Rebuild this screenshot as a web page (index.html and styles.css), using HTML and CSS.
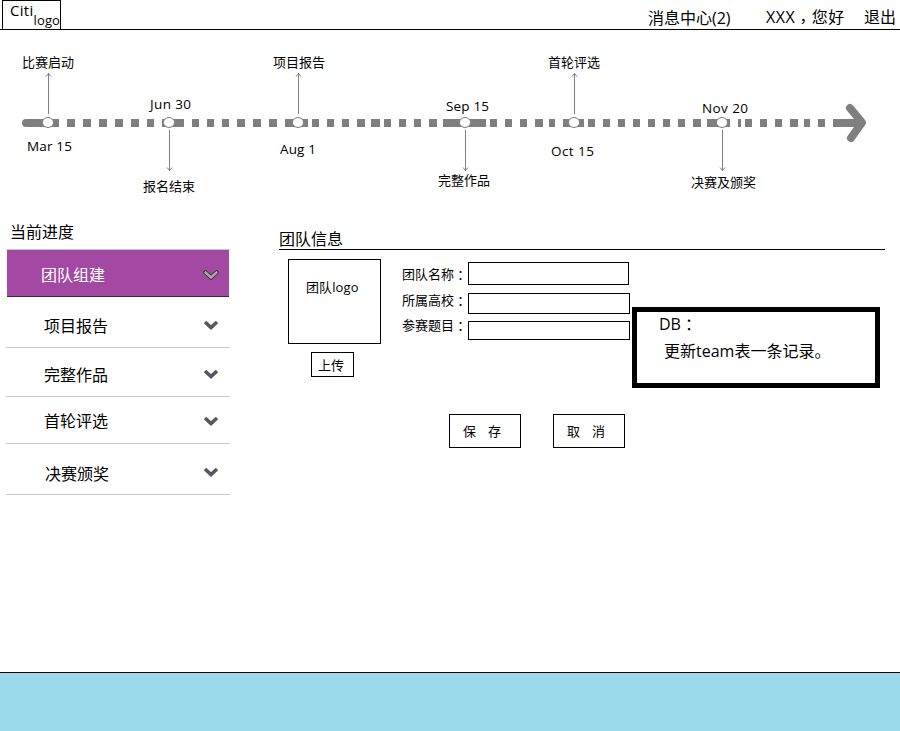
FILE: index.html
```html
<!DOCTYPE html>
<html lang="zh-CN">
<head>
<meta charset="utf-8">
<title>团队信息</title>
<link rel="stylesheet" href="styles.css">
</head>
<body>
<header class="topbar">
  <div class="logo"><span class="logo-main">Citi</span><span class="logo-sub">logo</span></div>
  <nav class="user-nav">
    <a class="messages">消息中心(2)</a>
    <a class="greeting">XXX<span class="punct comma" lang="zh-TW">，</span>您好</a>
    <a>退出</a>
  </nav>
</header>

<svg class="timeline" viewBox="0 30 900 180" width="900" height="180">
  <defs>
    <g id="up"><path d="M.5 114V73M-2 76.5L.5 73.5L3 76.5"/></g>
    <g id="down"><path d="M.5 130V171M-2 167.500L.5 170.500L3 167.500"/></g>
    <ellipse id="stop" cx="0" cy="122.500" rx="5.500" ry="5"/>
  </defs>
  <path class="track" d="M26 119H59V127H26Q22 127 22 123T26 119M67 119h8v8h-8zM83 119h8v8h-8zM99 119h8v8h-8zM115 119h8v8h-8zM131 119h8v8h-8zM147 119h7v8h-7zM162 119h22v8h-22zM192 119h7v8h-7zM207 119h7v8h-7zM222 119h7v8h-7zM237 119h8v8h-8zM253 119h8v8h-8zM269 119h8v8h-8zM285 119h23v8h-23zM312 119h7v8h-7zM327 119h7v8h-7zM342 119h7v8h-7zM357 119h8v8h-8zM371 119h9v8h-9zM384 119h7v8h-7zM399 119h7v8h-7zM414 119h7v8h-7zM429 119h8v8h-8zM443 119h43v8h-43zM490 119h7v8h-7zM505 119h7v8h-7zM520 119h7v8h-7zM535 119h8v8h-8zM549 119h6v8h-6zM563 119h21v8h-21zM588 119h7v8h-7zM603 119h7v8h-7zM618 119h7v8h-7zM633 119h7v8h-7zM648 119h7v8h-7zM663 119h7v8h-7zM678 119h7v8h-7zM693 119h8v8h-8zM707 119h23v8h-23zM738 119h3v8h-3zM745 119h7v8h-7zM760 119h7v8h-7zM775 119h7v8h-7zM790 119h8v8h-8zM804 119h6v8h-6zM818 119h7v8h-7zM833 119h28v8h-28z"/>
  <path class="arrowhead" d="M850 108L862 122.500L851 138"/>
  <g class="pointer">
    <use href="#up" x="48"/><use href="#down" x="169"/><use href="#up" x="298"/>
    <use href="#down" x="465"/><use href="#up" x="574"/><use href="#down" x="722"/>
  </g>
  <g class="stops">
    <use href="#stop" x="48"/><use href="#stop" x="169"/><use href="#stop" x="298"/>
    <use href="#stop" x="465"/><use href="#stop" x="574"/><use href="#stop" x="722"/>
  </g>
  <g class="stage">
    <text x="22" y="66.500">比赛启动</text><text x="143" y="190.500">报名结束</text>
    <text x="273" y="66.500">项目报告</text><text x="438" y="184.500">完整作品</text>
    <text x="548" y="66.500">首轮评选</text><text x="691" y="186.500">决赛及颁奖</text>
  </g>
  <g class="date">
    <text x="27" y="151" textLength="45">Mar 15</text><text x="150" y="109" textLength="41">Jun 30</text>
    <text x="280" y="154" textLength="36">Aug 1</text><text x="446" y="111" textLength="43">Sep 15</text>
    <text x="551" y="156" textLength="43">Oct 15</text><text x="702" y="113" textLength="46">Nov 20</text>
  </g>
</svg>

<main class="content">
  <aside class="progress">
    <h2>当前进度</h2>
    <ul>
      <li class="active"><span>团队组建</span><svg class="chev" viewBox="0 0 16 12"><path d="M2.500 3.500L8 8.500L13.500 3.500"/><path class="chev-fill" d="M2.500 3.500L8 8.500L13.500 3.500"/></svg></li>
      <li class="report"><span>项目报告</span><svg class="chev" viewBox="0 0 16 12"><path d="M2 3L8 8.500L14 3"/></svg></li>
      <li class="works"><span>完整作品</span><svg class="chev" viewBox="0 0 16 12"><path d="M2 3L8 8.500L14 3"/></svg></li>
      <li class="review"><span>首轮评选</span><svg class="chev" viewBox="0 0 16 12"><path d="M2 3L8 8.500L14 3"/></svg></li>
      <li class="final"><span>决赛颁奖</span><svg class="chev" viewBox="0 0 16 12"><path d="M2 3L8 8.500L14 3"/></svg></li>
    </ul>
  </aside>

  <section class="team">
    <h2>团队信息</h2>
    <div class="team-body">
      <div class="team-logo">
        <div class="logo-box">团队logo</div>
        <button class="upload">上传</button>
      </div>
      <div class="labels">
        <label for="name">团队名称<span class="punct" lang="zh-TW">：</span></label>
        <label for="school">所属高校<span class="punct" lang="zh-TW">：</span></label>
        <label for="topic">参赛题目<span class="punct" lang="zh-TW">：</span></label>
      </div>
      <div class="fields">
        <input id="name" class="name">
        <input id="school" class="school">
        <input id="topic" class="topic">
      </div>
      <div class="note">
        <p>DB<span class="punct" lang="zh-TW">：</span></p>
        <p class="note-text">更新team表一条记录。</p>
      </div>
    </div>
    <div class="actions"><button>保<i></i>存</button><button>取<i></i>消</button></div>
  </section>
</main>
<footer class="footer"></footer>
</body>
</html>
```
FILE: styles.css
```css
* { box-sizing: border-box; }
body {
  margin: 0;
  height: 731px;
  display: flex;
  flex-direction: column;
  overflow: hidden;
  background: #fff;
  color: #000;
  font: 16px/20px "Open Sans", "Noto Sans CJK SC", sans-serif;
}
h2, p, ul { margin: 0; padding: 0; font-size: 16px; font-weight: 400; }
.punct { font-family: "Noto Sans CJK TC", sans-serif; line-height: 1; position: relative; top: 1px; }
.comma { top: 4px; }

.topbar { display: flex; justify-content: space-between; height: 30px; border-bottom: 1px solid #000; flex: none; }
.logo { display: flex; width: 59px; height: 29px; margin-left: 2px; padding-left: 7px; border: solid #000; border-width: 1px 1px 0; font-size: 15px; white-space: nowrap; }
.logo-main { width: 24px; margin-top: -1px; letter-spacing: .3px; }
.logo-sub { margin-top: 9px; font-size: 13px; letter-spacing: .1px; }
.user-nav { display: flex; padding: 7px 4px 0 0; white-space: nowrap; }
.messages { width: 118px; padding-top: 1px; }
.greeting { width: 98px; letter-spacing: .5px; }

.timeline { display: block; flex: none; }
.track { fill: #7f7f7f; }
.arrowhead { fill: none; stroke: #7f7f7f; stroke-width: 8; stroke-linecap: round; stroke-linejoin: round; }
.pointer { fill: none; stroke: #7f7f7f; stroke-width: 1; }
.stops { fill: #fff; stroke: #7f7f7f; }
.stage { font-size: 13px; }
.date { font-size: 13.5px; }

.content { display: flex; flex: 1; }
.progress { width: 224px; margin-left: 6px; }
.progress h2 { height: 39px; padding: 12px 0 0 4px; }
.progress ul { list-style: none; border-top: 1px solid #c8c8c8; }
.progress li { display: flex; align-items: center; justify-content: space-between; padding: 0 11px 0 38px; border-bottom: 1px solid #c8c8c8; }
.progress .active { height: 47px; margin: 0 1px; padding: 4px 10px 0 34px; background: #a349a4; color: #fff; border-color: #472048; }
.report { height: 51px; padding-top: 7px !important; }
.works { height: 49px; padding-top: 6px !important; }
.review { height: 47px; padding-top: 2px !important; }
.final { height: 51px; padding-top: 10px !important; padding-left: 39px !important; }
.chev { width: 16px; height: 12px; fill: none; stroke: #555861; stroke-width: 3.6; }
.final .chev { margin-bottom: 4px; }
.works .chev { margin-bottom: 2px; }
.report .chev { margin-bottom: 2px; }
.active .chev { margin-bottom: 1px; stroke: #282828; stroke-width: 4.2; stroke-linecap: round; }
.active .chev .chev-fill { stroke: #aaa; stroke-width: 2.6; }

.team { width: 606px; margin-left: 49px; }
.team h2 { height: 40px; padding-top: 19px; border-bottom: 1px solid #000; }
.team-body { display: flex; height: 138px; padding-left: 9px; font-size: 13px; }
.team-logo { display: flex; flex-direction: column; width: 93px; padding-top: 9px; }
.logo-box { height: 85px; padding: 17px 0 0 17px; border: 1px solid #000; letter-spacing: .1px; }
button { padding: 0; border: 1px solid #000; background: #fff; color: #000; font: 13px/20px "Open Sans", "Noto Sans CJK SC", sans-serif; }
.upload { width: 43px; height: 25px; margin: 8px 0 0 23px; padding: 0 3px 0 0; }
.labels { display: flex; flex-direction: column; gap: 5.5px; width: 87px; padding: 14px 0 0 21px; white-space: nowrap; }
.fields { display: flex; flex-direction: column; width: 162px; padding-top: 12px; }
.fields input { padding: 0 3px; border: 1px solid #000; border-radius: 0; background: #fff; }
.name { width: 161px; height: 23px; }
.school { width: 162px; height: 21px; margin-top: 8px; }
.topic { width: 162px; height: 19px; margin-top: 7px; }
.note { width: 248px; height: 81px; margin: 57px 0 0 2px; padding: 2px 0 0 22px; border: 5px solid #000; font-size: 16px; flex: none; }
.note-text { margin-top: 7px; padding-left: 5px; }
.actions { display: flex; gap: 32px; margin: 26px 0 0 170px; }
.actions button { width: 72px; height: 34px; padding-right: 6px; }
.actions i { display: inline-block; width: 12px; }

.footer { height: 59px; flex: none; border-top: 1px solid #000; background: #9ad9ea; }
```
